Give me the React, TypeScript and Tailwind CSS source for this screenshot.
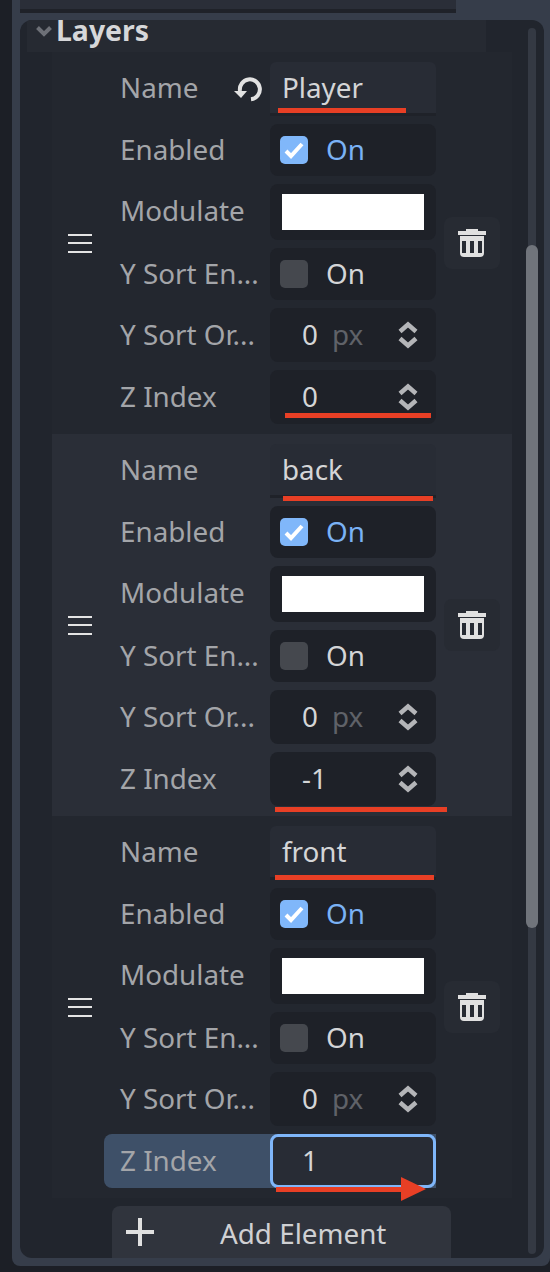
import React from 'react';

type Underline = { left: string; top: string; width: string };

const Spinner = () => (
  <svg width="20" height="28" viewBox="0 0 20 28" fill="none" stroke="#b4b5b8" strokeWidth="4.5" strokeLinejoin="miter" className="shrink-0">
    <path d="M2 10.5 L10 3.5 L18 10.5" />
    <path d="M2 17.5 L10 24.5 L18 17.5" />
  </svg>
);

const Trash = () => (
  <svg width="28" height="28" viewBox="0 0 28 28" fill="#e0e0e0">
    <rect x="8" y="0" width="12" height="3" />
    <rect x="0" y="2" width="28" height="4" />
    <path fillRule="evenodd" d="M2 7 H26 V24 Q26 28 22 28 H6 Q2 28 2 24 Z M4 12 V24 H8 V12 Z M12 12 V24 H16 V12 Z M20 12 V24 H24 V12 Z" />
  </svg>
);

const ResetIcon = () => (
  <svg width="30" height="26" viewBox="0 0 30 26" fill="none">
    <path d="M6 14 A10 10 0 1 1 17 22.3" stroke="#e2e2e2" strokeWidth="4" />
    <path d="M0 14 H13 L7 21 Z" fill="#e2e2e2" />
  </svg>
);

const Handle = () => (
  <div className="flex flex-col gap-[6.5px] w-6">
    <div className="h-[2px] bg-[#e4e4e4]" />
    <div className="h-[2px] bg-[#e4e4e4]" />
    <div className="h-[2px] bg-[#e4e4e4]" />
  </div>
);

const Label = ({ text, high }: { text: string; high?: boolean }) => (
  <div className={`w-[166px] pl-4 text-[#a3a5a9] ${high ? 'pb-[2px]' : ''}`}>{text}</div>
);

const Mark = ({ left, top, width }: Underline) => (
  <div className={`absolute h-[5px] bg-[#e83f25] ${left} ${top} ${width}`} />
);

const Layer = ({
  name,
  z,
  striped,
  reset,
  focused,
  nameMark,
  zMark,
}: {
  name: string;
  z: string;
  striped?: boolean;
  reset?: boolean;
  focused?: boolean;
  nameMark: Underline;
  zMark?: Underline;
}) => (
  <div className={`ml-8 w-[460px] h-[382px] flex items-center ${striped ? 'bg-[#2a2e37]' : 'bg-[#23272f]'}`}>
    <div className="w-[52px] flex justify-center pl-[4px]">
      <Handle />
    </div>
    <div className="w-[332px] flex flex-col gap-2">
      <div className="flex h-[54px] items-center relative">
        <Label text="Name" high />
        {reset && (
          <div className="absolute left-[130px] top-[15px]">
            <ResetIcon />
          </div>
        )}
        <div className="relative w-[166px] h-full bg-[#282c35] border-b-[3px] border-[#1f2229] rounded-t-md pl-3 flex items-center text-[#d4d5d7]">
          {name}
          <Mark {...nameMark} />
        </div>
      </div>
      <div className="flex h-[52px] items-center">
        <Label text="Enabled" />
        <div className="w-[166px] h-full bg-[#1e2128] rounded-lg pl-[10px] flex items-center gap-[18px] text-[#7ab2f5]">
          <div className="w-7 h-7 rounded-[5px] bg-[#80b7fa] flex items-center justify-center">
            <svg width="20" height="18" viewBox="0 0 20 18" fill="none" stroke="#ffffff" strokeWidth="4">
              <path d="M2 10 L7 15 L18 3" />
            </svg>
          </div>
          <span className="pb-[1px]">On</span>
        </div>
      </div>
      <div className="flex h-14 items-center">
        <Label text="Modulate" high />
        <div className="w-[166px] h-full bg-[#1e2128] rounded-lg px-3 flex items-center">
          <div className="w-full h-9 bg-white" />
        </div>
      </div>
      <div className="flex h-[52px] items-center">
        <Label text="Y Sort En..." />
        <div className="w-[166px] h-full bg-[#1e2128] rounded-lg pl-[10px] flex items-center gap-[18px] text-[#d4d5d7]">
          <div className="w-7 h-7 rounded-[5px] bg-[#45484e]" />
          <span className="pb-[1px]">On</span>
        </div>
      </div>
      <div className="flex h-[54px] items-center">
        <Label text="Y Sort Or..." />
        <div className="w-[166px] h-full bg-[#1e2128] rounded-lg pl-8 pr-[18px] flex items-center text-[#d4d5d7]">
          <span className="pb-[1px]">0</span>
          <span className="ml-[14px] pb-[1px] text-[#5f6268]">px</span>
          <div className="ml-auto">
            <Spinner />
          </div>
        </div>
      </div>
      <div className={`flex h-[54px] items-center rounded-l-lg ${focused ? 'bg-[#3e5068]' : ''}`}>
        <Label text="Z Index" />
        <div
          className={`relative w-[166px] h-full rounded-lg pr-[18px] flex items-center text-[#d4d5d7] ${
            focused ? 'bg-[#282c35] border-[3px] border-[#7fb6f9] pl-[29px]' : 'bg-[#1e2128] pl-8'
          }`}
        >
          <span className="pb-[1px]">{z}</span>
          {!focused && (
            <div className="ml-auto">
              <Spinner />
            </div>
          )}
          {zMark && <Mark {...zMark} />}
          {focused && (
            <div className="absolute left-[3px] top-[40px] flex items-center">
              <div className="w-[126px] h-[5px] bg-[#e83f25]" />
              <div className="w-0 h-0 -ml-[1px] border-y-[12px] border-y-transparent border-l-[25px] border-l-[#e83f25]" />
            </div>
          )}
        </div>
      </div>
    </div>
    <div className="ml-2 w-14 h-[52px] rounded-lg bg-[#272b33] flex items-center justify-center">
      <Trash />
    </div>
  </div>
);

const App: React.FC = () => {
  return (
    <div
      className="w-[550px] h-[1272px] bg-[#1c1f26] pl-3 pb-[6px] text-[27.8px] leading-none overflow-hidden"
      style={{ fontFamily: '"Noto Sans", sans-serif' }}
    >
      <div className="h-full bg-[#363d4a] pl-2 pr-[6px] pb-2 rounded-bl-lg rounded-br-lg flex flex-col">
        <div className="w-[436px] h-[13px] shrink-0 bg-[#2a2e38] border-b-4 border-[#1f2229]" />
        <div className="relative mt-[7px] flex-1 rounded-xl bg-[#21252d] overflow-hidden">
          <div className="ml-[7px] w-[459px] h-8 bg-[#262a32] flex items-start">
            <svg width="16" height="11" viewBox="0 0 16 11" fill="none" stroke="#6d7077" strokeWidth="4" className="ml-[9px] mt-[6px]">
              <path d="M1.5 1.5 L8 8 L14.5 1.5" />
            </svg>
            <span className="ml-1 text-[28.4px] font-bold leading-[20px] text-[#d6d7d9]">Layers</span>
          </div>
          <Layer
            name="Player"
            z="0"
            reset
            nameMark={{ left: 'left-[8px]', top: 'top-[46px]', width: 'w-[128px]' }}
            zMark={{ left: 'left-[15px]', top: 'top-[43px]', width: 'w-[146px]' }}
          />
          <Layer
            name="back"
            z="-1"
            striped
            nameMark={{ left: 'left-[13px]', top: 'top-[52px]', width: 'w-[150px]' }}
            zMark={{ left: 'left-[5px]', top: 'top-[55px]', width: 'w-[172px]' }}
          />
          <Layer
            name="front"
            z="1"
            focused
            nameMark={{ left: 'left-[5px]', top: 'top-[49px]', width: 'w-[159px]' }}
          />
          <div className="ml-[92px] mt-2 w-[339px] h-[52px] rounded-t-lg bg-[#30343d] flex items-center relative text-[#cfd0d3]">
            <svg width="28" height="28" viewBox="0 0 28 28" fill="#e0e0e0" className="ml-[14px]">
              <rect x="0" y="12" width="28" height="4" />
              <rect x="12" y="0" width="4" height="28" />
            </svg>
            <span className="absolute left-[108px] top-[14px]">Add Element</span>
          </div>
          <div className="absolute left-[508px] top-2 bottom-1 w-2 rounded bg-[#343943]" />
          <div className="absolute left-[506px] top-[225px] h-[683px] w-3 rounded-md bg-[#70747b]" />
        </div>
      </div>
    </div>
  );
};

export default App;
